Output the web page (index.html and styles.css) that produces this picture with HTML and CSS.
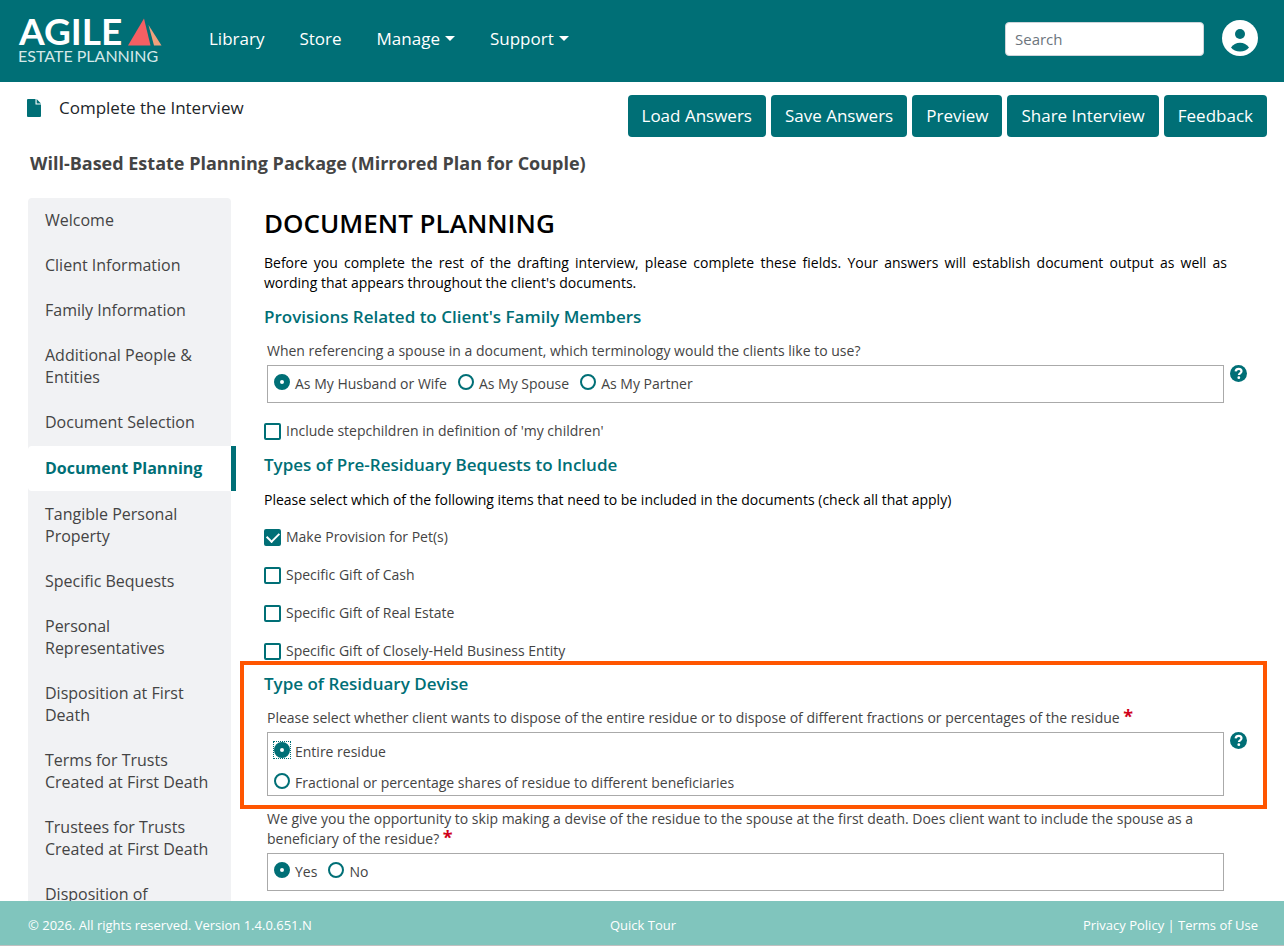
FILE: index.html
```html
<!DOCTYPE html>
<html lang="en">
<head>
<meta charset="utf-8">
<meta name="viewport" content="width=device-width, initial-scale=1">
<title>Agile Estate Planning - Complete the Interview</title>
<link rel="stylesheet" href="styles.css">
</head>
<body>
<header class="topbar">
  <a class="logo" href="#" aria-label="Agile Estate Planning">
    <svg width="150" height="50" viewBox="0 0 150 50" role="img" aria-hidden="true">
      <text class="logo-name" x="1" y="30">AGILE</text>
      <text class="logo-tag" x="0" y="47">ESTATE PLANNING</text>
      <path d="M126 3.500 132.500 30.500H110z" fill="#f55f63"/>
      <path d="M130.500 10 143.500 30.500h-7.500z" fill="#f0a07c"/>
    </svg>
  </a>
  <nav class="main-nav" aria-label="Main">
    <a href="#">Library</a>
    <a href="#">Store</a>
    <a href="#" class="has-menu">Manage</a>
    <a href="#" class="has-menu">Support</a>
  </nav>
  <input class="search" type="search" placeholder="Search" aria-label="Search">
  <a class="avatar" href="#" aria-label="Account">
    <svg width="36" height="36" viewBox="0 0 36 36" aria-hidden="true">
      <circle cx="18" cy="18" r="18" fill="#fff"/>
      <circle cx="18" cy="14" r="5" fill="#006f76"/>
      <path d="M9 27.500C11 24.500 14.500 22.700 18 22.700s7 1.800 9 4.800C25 30 21.800 31.500 18 31.500S11 30 9 27.500z" fill="#006f76"/>
    </svg>
  </a>
</header>

<main class="page">
  <div class="page-head">
    <div class="page-title">
      <svg width="14" height="18" viewBox="0 0 14 18" aria-hidden="true">
        <path d="M1 0h7.500v5.500H14V17a1 1 0 0 1-1 1H1a1 1 0 0 1-1-1V1a1 1 0 0 1 1-1z" fill="#006f76"/>
        <path d="M9.600 0v4.500H14z" fill="#006f76"/>
      </svg>
      <span>Complete the Interview</span>
    </div>
    <div class="actions">
      <button type="button">Load Answers</button>
      <button type="button">Save Answers</button>
      <button type="button">Preview</button>
      <button type="button">Share Interview</button>
      <button type="button">Feedback</button>
    </div>
  </div>
  <h2 class="package">Will-Based Estate Planning Package (Mirrored Plan for Couple)</h2>

  <div class="workspace">
    <nav class="steps" aria-label="Interview sections">
      <a href="#">Welcome</a>
      <a href="#">Client Information</a>
      <a href="#">Family Information</a>
      <a href="#">Additional People &amp; Entities</a>
      <a href="#">Document Selection</a>
      <a href="#" class="active" aria-current="page">Document Planning</a>
      <a href="#">Tangible Personal Property</a>
      <a href="#">Specific Bequests</a>
      <a href="#">Personal Representatives</a>
      <a href="#">Disposition at First Death</a>
      <a href="#">Terms for Trusts Created at First Death</a>
      <a href="#">Trustees for Trusts Created at First Death</a>
      <a href="#">Disposition of</a>
    </nav>

    <form class="interview">
      <section class="block">
        <h1>DOCUMENT PLANNING</h1>
        <p class="intro">Before you complete the rest of the drafting interview, please complete these fields. Your answers will establish document output as well as wording that appears throughout the client's documents.</p>
        <h3>Provisions Related to Client's Family Members</h3>
        <div class="question" role="radiogroup" aria-labelledby="q-term">
          <p class="prompt" id="q-term">When referencing a spouse in a document, which terminology would the clients like to use?</p>
          <div class="options">
            <label><input type="radio" name="term" checked>As My Husband or Wife</label>
            <label><input type="radio" name="term">As My Spouse</label>
            <label><input type="radio" name="term">As My Partner</label>
          </div>
          <button type="button" class="help" aria-label="Help">
            <svg width="17" height="17" viewBox="0 0 17 17" aria-hidden="true"><circle cx="8.500" cy="8.500" r="8.500" fill="#006f76"/><path d="M5.600 6.400C5.900 4.700 7 3.900 8.600 3.900c1.700 0 2.900 1 2.900 2.400 0 2-2.600 2-2.600 3.700" fill="none" stroke="#fff" stroke-width="2.200"/><circle cx="8.800" cy="12.700" r="1.400" fill="#fff"/></svg>
          </button>
        </div>
        <label class="check lone"><input type="checkbox">Include stepchildren in definition of 'my children'</label>
        <h3>Types of Pre-Residuary Bequests to Include</h3>
        <p class="lead">Please select which of the following items that need to be included in the documents (check all that apply)</p>
        <div class="checks">
          <label class="check"><input type="checkbox" checked>Make Provision for Pet(s)</label>
          <label class="check"><input type="checkbox">Specific Gift of Cash</label>
          <label class="check"><input type="checkbox">Specific Gift of Real Estate</label>
          <label class="check"><input type="checkbox">Specific Gift of Closely-Held Business Entity</label>
        </div>
      </section>

      <section class="block highlight">
        <h3>Type of Residuary Devise</h3>
        <div class="question" role="radiogroup" aria-labelledby="q-residue">
          <p class="prompt" id="q-residue">Please select whether client wants to dispose of the entire residue or to dispose of different fractions or percentages of the residue <span class="required">*</span></p>
          <div class="options stacked">
            <label><span class="focus-ring"><input type="radio" name="residue" checked></span>Entire residue</label>
            <label><input type="radio" name="residue">Fractional or percentage shares of residue to different beneficiaries</label>
          </div>
          <button type="button" class="help" aria-label="Help">
            <svg width="17" height="17" viewBox="0 0 17 17" aria-hidden="true"><circle cx="8.500" cy="8.500" r="8.500" fill="#006f76"/><path d="M5.600 6.400C5.900 4.700 7 3.900 8.600 3.900c1.700 0 2.900 1 2.900 2.400 0 2-2.600 2-2.600 3.700" fill="none" stroke="#fff" stroke-width="2.200"/><circle cx="8.800" cy="12.700" r="1.400" fill="#fff"/></svg>
          </button>
        </div>
      </section>

      <section class="block">
        <div class="question" role="radiogroup" aria-labelledby="q-spouse">
          <p class="prompt" id="q-spouse">We give you the opportunity to skip making a devise of the residue to the spouse at the first death. Does client want to include the spouse as a beneficiary of the residue? <span class="required">*</span></p>
          <div class="options">
            <label><input type="radio" name="spouse" checked>Yes</label>
            <label><input type="radio" name="spouse">No</label>
          </div>
        </div>
      </section>
    </form>
  </div>
</main>

<footer class="footer">
  <span>© 2026. All rights reserved. Version 1.4.0.651.N</span>
  <a href="#">Quick Tour</a>
  <span class="legal"><a href="#">Privacy Policy</a> | <a href="#">Terms of Use</a></span>
</footer>
</body>
</html>
```
FILE: styles.css
```css
* {
  box-sizing: border-box;
}

body {
  --teal: #006f76;
  --text: #444;
  margin: 0;
  height: 100vh;
  display: flex;
  flex-direction: column;
  background: #fff;
  color: var(--text);
  font: 14px/20px "Segoe UI", "Open Sans", "Noto Sans", sans-serif;
}

a {
  color: inherit;
  text-decoration: none;
}

h1, h2, h3, p {
  margin: 0;
}

/* Top bar */
.topbar {
  flex: none;
  display: flex;
  align-items: center;
  height: 82px;
  padding: 0 26px 4px 18px;
  background: var(--teal);
  color: #fff;
}

.logo {
  display: flex;
  margin-top: 2px;
}

.logo svg {
  overflow: visible;
}

.logo-name {
  font: 700 37px Lato, sans-serif;
  fill: #fff;
}

.logo-tag {
  font: 400 16px Lato, sans-serif;
  fill: #d5e8e9;
}

.main-nav {
  display: flex;
  gap: 35px;
  margin-left: 41px;
  font-size: 17px;
  line-height: 24px;
}

.has-menu::after {
  content: "";
  display: inline-block;
  margin-left: 5px;
  vertical-align: 4px;
  border: 5px solid transparent;
  border-top-color: #fff;
  border-bottom: 0;
}

.search {
  width: 199px;
  height: 34px;
  margin-left: auto;
  padding: 0 9px;
  border: 1px solid #ced4da;
  border-radius: 4px;
  background: #fff;
  color: var(--text);
  font: inherit;
  font-size: 15px;
}

.search::placeholder {
  color: #6c757d;
}

.avatar {
  display: flex;
  margin: 0 0 2px 18px;
}

/* Page heading */
.page {
  flex: 1;
  min-height: 0;
  overflow: hidden;
}

.page-head {
  display: flex;
  justify-content: space-between;
  padding: 13px 17px 0 27px;
}

.page-title {
  display: flex;
  align-items: center;
  gap: 18px;
  height: 26px;
  color: #212529;
  font-size: 17px;
}

.actions {
  display: flex;
  gap: 5px;
}

.actions button {
  height: 42px;
  padding: 0 14px;
  border: 0;
  border-radius: 4px;
  background: var(--teal);
  color: #fff;
  font: inherit;
  font-size: 17px;
}

.package {
  padding: 14px 30px 0;
  font-size: 18px;
  line-height: 24px;
  font-weight: 700;
}

.workspace {
  display: flex;
  align-items: flex-start;
  gap: 9px;
  padding: 23px 17px 0 28px;
}

/* Section list */
.steps {
  flex: none;
  width: 203px;
  border-radius: 4px;
  background: #f1f2f4;
  font-size: 16px;
  line-height: 22px;
}

.steps a {
  display: block;
  padding: 11px 17px 12px;
}

.steps .active {
  margin: 1px -5px 1px 0;
  border-right: 5px solid var(--teal);
  border-radius: 4px 0 0 4px;
  background: #fff;
  color: var(--teal);
  font-weight: 700;
  white-space: nowrap;
}

/* Interview form */
.interview {
  flex: 1;
  min-width: 0;
}

.block {
  padding: 0 16px 0 20px;
  border: 0 solid transparent;
  border-width: 0 4px;
}

.highlight {
  padding-top: 7px;
  padding-bottom: 9px;
  border: 4px solid #ff5500;
}

h1 {
  padding-top: 8px;
  color: #000;
  font-size: 26px;
  line-height: 34px;
  font-weight: 600;
}

.intro,
.lead {
  margin-right: 20px;
  color: #000;
}

.intro {
  margin-top: 13px;
  text-align: justify;
}

h3 {
  color: var(--teal);
  font-size: 17px;
  line-height: 24px;
  font-weight: 600;
}

.block * + h3 {
  margin-top: 12px;
}

h3 + .question {
  margin-top: 12px;
}

.lead {
  margin-top: 13px;
}

.question {
  display: grid;
  grid-template-columns: 1fr 17px;
  gap: 4px 6px;
  padding-left: 3px;
}

.prompt {
  grid-column: 1;
}

.required {
  color: #d0021b;
  font-size: 18px;
  line-height: 16px;
  font-weight: 700;
}

.options {
  grid-column: 1;
  display: flex;
  gap: 11px;
  padding: 8px 6px;
  border: 1px solid #aaa;
}

.options label {
  display: flex;
  gap: 5px;
}

.stacked {
  flex-direction: column;
  padding: 9px 6px 2px;
}

input[type="radio"] {
  appearance: none;
  flex: none;
  width: 16px;
  height: 16px;
  margin: 0;
  border: 2px solid var(--teal);
  border-radius: 50%;
  background: #fff;
}

input[type="radio"]:checked {
  border-width: 6px;
}

.focus-ring {
  display: flex;
  align-self: flex-start;
  outline: 1px dotted var(--teal);
}

.help {
  grid-column: 2;
  align-self: start;
  display: flex;
  padding: 0;
  border: 0;
  background: none;
}

.check {
  display: flex;
  align-items: center;
  gap: 5px;
}

.lone {
  margin-top: 18px;
}

.checks {
  display: flex;
  flex-direction: column;
  gap: 18px;
  margin-top: 17px;
}

input[type="checkbox"] {
  appearance: none;
  flex: none;
  display: grid;
  place-content: center;
  width: 17px;
  height: 17px;
  margin: 0;
  border: 2px solid var(--teal);
  border-radius: 2px;
  background: #fff;
}

input[type="checkbox"]:checked {
  background: var(--teal);
}

input[type="checkbox"]:checked::before {
  content: "";
  width: 10px;
  height: 6px;
  margin-bottom: 3px;
  border: solid #fff;
  border-width: 0 0 2px 2px;
  rotate: -45deg;
}

/* Footer */
.footer {
  flex: none;
  display: grid;
  grid-template-columns: 1fr auto 1fr;
  align-items: center;
  height: 45px;
  padding: 3px 26px 0 28px;
  border-bottom: 1px solid #c0c0c0;
  background: #80c5bd;
  color: #fff;
  font-size: 13px;
}

.legal {
  justify-self: end;
}
```
